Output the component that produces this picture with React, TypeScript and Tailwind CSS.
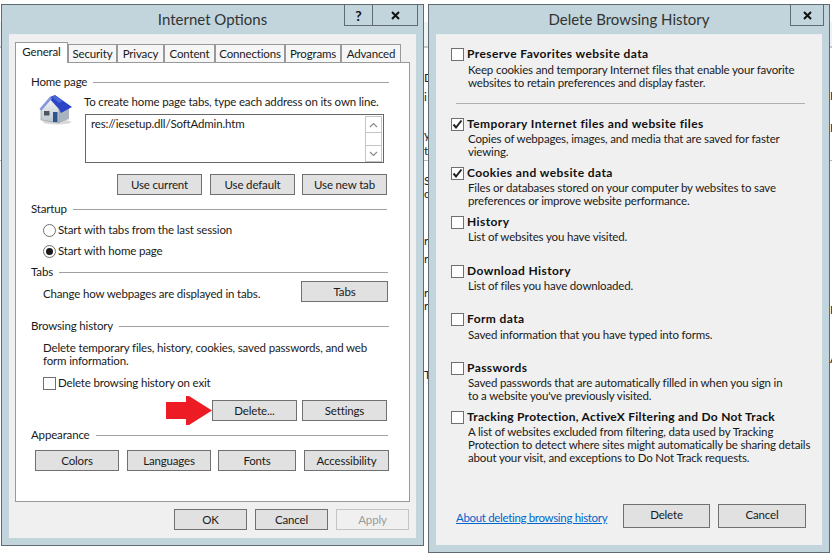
const font = "font-['Lato','Liberation_Sans',sans-serif]"

const tabs = [
  { label: "Security", w: "w-[49px]" },
  { label: "Privacy", w: "w-[47px]" },
  { label: "Content", w: "w-[51px]" },
  { label: "Connections", w: "w-[70px]" },
  { label: "Programs", w: "w-[56px]" },
  { label: "Advanced", w: "w-[60px]" },
]

const history = [
  {
    title: "Temporary Internet files and website files",
    lines: ["Copies of webpages, images, and media that are saved for faster", "viewing."],
    checked: true,
    h: "h-[49px]",
  },
  {
    title: "Cookies and website data",
    lines: ["Files or databases stored on your computer by websites to save", "preferences or improve website performance."],
    checked: true,
    h: "h-[49px]",
  },
  { title: "History", lines: ["List of websites you have visited."], h: "h-[49px]" },
  { title: "Download History", lines: ["List of files you have downloaded."], h: "h-[48px]" },
  { title: "Form data", lines: ["Saved information that you have typed into forms."], h: "h-[49px]", desc: "mt-px" },
  {
    title: "Passwords",
    lines: ["Saved passwords that are automatically filled in when you sign in", "to a website you've previously visited."],
    h: "h-[49px]",
  },
  {
    title: "Tracking Protection, ActiveX Filtering and Do Not Track",
    lines: [
      "A list of websites excluded from filtering, data used by Tracking",
      "Protection to detect where sites might automatically be sharing details",
      "about your visit, and exceptions to Do Not Track requests.",
    ],
    h: "h-[55px]",
    tight: true,
  },
]

// bits of the page behind the dialogs, seen in the gaps
const behind = [
  { ch: "D", pos: "left-[424px] top-[72px]" },
  { ch: "i", pos: "left-[424px] top-[91px]" },
  { ch: "y", pos: "left-[424px] top-[129px]" },
  { ch: "t", pos: "left-[424px] top-[145px]" },
  { ch: "S", pos: "left-[424px] top-[175px]" },
  { ch: "c", pos: "left-[424px] top-[188px]" },
  { ch: "r", pos: "left-[424px] top-[235px]" },
  { ch: "r", pos: "left-[424px] top-[253px]" },
  { ch: "r", pos: "left-[424px] top-[287px]" },
  { ch: "r", pos: "left-[424px] top-[300px]" },
  { ch: "T", pos: "left-[424px] top-[369px]" },
  { ch: "H", pos: "left-[830px] top-[90px]" },
  { ch: "H", pos: "left-[830px] top-[122px]" },
  { ch: "I", pos: "left-[830px] top-[304px]" },
  { ch: "A", pos: "left-[830px] top-[353px]" },
]

function Btn({ children, className = "" }: { children: React.ReactNode; className?: string }) {
  return (
    <button className={`flex h-[21px] items-center justify-center border border-[#707070] bg-[#e1e1e1] text-[#1a1a1a] ${className}`}>
      {children}
    </button>
  )
}

function GroupHead({ label, right = "mr-0" }: { label: string; right?: string }) {
  return (
    <div className={`flex h-4 items-center gap-[6px] ${right}`}>
      <span className="whitespace-nowrap">{label}</span>
      <div className="h-px flex-1 bg-[#a0a0a0]" />
    </div>
  )
}

function Check({ checked = false }: { checked?: boolean }) {
  return (
    <span className="flex h-[13px] w-[13px] shrink-0 items-center justify-center border border-[#707070] bg-white">
      {checked && (
        <svg width="11" height="11" viewBox="0 0 11 11">
          <path d="M1.5 5.5 L4 8.5 L9.5 1.5" fill="none" stroke="#222" strokeWidth="2" />
        </svg>
      )}
    </span>
  )
}

function Radio({ checked = false }: { checked?: boolean }) {
  return (
    <span className="flex h-[13px] w-[13px] shrink-0 items-center justify-center rounded-full border border-[#707070] bg-white">
      {checked && <span className="h-[7px] w-[7px] rounded-full bg-[#1a1a1a]" />}
    </span>
  )
}

function CloseBtn({ className = "" }: { className?: string }) {
  return (
    <span className={`flex h-[22px] items-center justify-center border border-[#5f6b70] ${className}`}>
      <svg width="9" height="9" viewBox="0 0 9 9">
        <path d="M1 1 L8 8 M8 1 L1 8" stroke="#111" strokeWidth="2" fill="none" />
      </svg>
    </span>
  )
}

function HouseIcon() {
  return (
    <svg width="34" height="30" viewBox="0 0 34 30" className="shrink-0">
      <defs>
        <linearGradient id="front" x1="0" y1="0" x2="0" y2="1">
          <stop offset="0" stopColor="#f2f4f6" />
          <stop offset="1" stopColor="#bcc5cd" />
        </linearGradient>
      </defs>
      <ellipse cx="19" cy="27" rx="14" ry="2.5" fill="#d8d8d8" />
      <path d="M21 14 L31 11 L31 24 L21 28 Z" fill="#a9b4be" />
      <path d="M3 14 L12 4 L21 14 L21 28 L3 25 Z" fill="url(#front)" stroke="#8b96a0" strokeWidth="0.6" />
      <path d="M12 2 L17 0 L34 12 L23 18 L21 14 L12 4 Z" fill="#2a45c6" />
      <path d="M14 2 L17 0.5 L25 6 L21 8 Z" fill="#4c66dc" />
      <path d="M1.5 14 L12 1.5 L14 3.5 L3.5 15.5 Z" fill="#8496e0" />
      <rect x="15" y="17" width="4.5" height="10" fill="#2c5590" />
      <rect x="6" y="16" width="5.5" height="4.5" fill="#4a5561" />
    </svg>
  )
}

function RedArrow() {
  return (
    <svg width="46" height="30" viewBox="0 0 46 30" className="shrink-0">
      <path d="M0 6 H20 V0 H23 L46 14.5 L23 29 H20 V23 H0 Z" fill="#ed1c24" />
    </svg>
  )
}

function SpinBar() {
  return (
    <div className="mr-px flex h-[46px] w-[17px] flex-col border border-[#c4c4c4] bg-white">
      <div className="flex h-[16px] items-center justify-center border-b border-[#c4c4c4]">
        <svg width="9" height="6" viewBox="0 0 9 6">
          <path d="M1 5 L4.5 1.5 L8 5" fill="none" stroke="#8a8a8a" strokeWidth="1.2" />
        </svg>
      </div>
      <div className="flex-1" />
      <div className="flex h-[16px] items-center justify-center border-t border-[#c4c4c4]">
        <svg width="9" height="6" viewBox="0 0 9 6">
          <path d="M1 1 L4.5 4.5 L8 1" fill="none" stroke="#8a8a8a" strokeWidth="1.2" />
        </svg>
      </div>
    </div>
  )
}

function InternetOptions() {
  return (
    <div className="flex h-[542px] w-[423px] shrink-0 flex-col border border-[#5f6b70] bg-[#c2d5dc] px-[7px] pb-[7px]">
      <div className="relative flex h-[29px] shrink-0 items-center justify-center text-[15px] tracking-normal text-[#333]">
        Internet Options
        <div className="absolute right-[-2px] top-[-1px] flex">
          <span className="flex h-[22px] w-[29px] items-center justify-center border border-[#5f6b70] text-[14px] font-bold text-[#111]">?</span>
          <CloseBtn className="ml-[-1px] w-[46px]" />
        </div>
      </div>
      <div className="flex flex-1 flex-col border-t border-[#e8eef0] bg-[#f0f0f0] px-[6px] pt-[7px]">
        <div className="relative z-10 flex h-[20px] items-end">
          <div className="mb-[-1px] flex h-[21px] w-[53px] items-center justify-center border border-b-0 border-[#999] bg-white pb-[2px]">General</div>
          {tabs.map((t) => (
            <div key={t.label} className={`flex h-[18px] ${t.w} items-center justify-center border border-b-0 border-[#999] bg-[#f6f6f6]`}>
              {t.label}
            </div>
          ))}
        </div>
        <div className="flex h-[440px] w-[395px] flex-col border border-[#999] bg-white pl-[15px] pr-[20px] pt-[11px]">
          <GroupHead label="Home page" />
          <div className="mt-1 flex">
            <div className="ml-[7px] w-[46px] shrink-0 pt-px">
              <HouseIcon />
            </div>
            <div className="min-w-0 flex-1">
              <div className="h-4 whitespace-nowrap leading-4">To create home page tabs, type each address on its own line.</div>
              <div className="ml-px mr-[5px] mt-1 flex h-[49px] justify-between border border-[#666] pl-[5px] pt-px">
                <span className="h-4 leading-4">res://iesetup.dll/SoftAdmin.htm</span>
                <SpinBar />
              </div>
            </div>
          </div>
          <div className="mr-[2px] mt-[11px] flex justify-end gap-[7px]">
            <Btn className="mr-px w-[85px]">Use current</Btn>
            <Btn className="w-[85px]">Use default</Btn>
            <Btn className="w-[85px]">Use new tab</Btn>
          </div>

          <div className="mt-[6px]">
            <GroupHead label="Startup" right="mr-[2px]" />
          </div>
          <label className="ml-3 mt-[5px] flex h-4 items-center gap-[2px]">
            <Radio />
            Start with tabs from the last session
          </label>
          <label className="ml-3 mt-[5px] flex h-4 items-center gap-[2px]">
            <Radio checked />
            Start with home page
          </label>

          <div className="mt-[5px]">
            <GroupHead label="Tabs" right="mr-px" />
          </div>
          <div className="mr-px mt-px flex justify-between">
            <span className="ml-3 mt-[5px] h-4 leading-4">Change how webpages are displayed in tabs.</span>
            <Btn className="w-[87px]">Tabs</Btn>
          </div>

          <div className="mt-[16px]">
            <GroupHead label="Browsing history" />
          </div>
          <div className="ml-3 mt-[7px] leading-[13px]">
            <div className="whitespace-nowrap">Delete temporary files, history, cookies, saved passwords, and web</div>
            <div>form information.</div>
          </div>
          <label className="ml-3 mt-2 flex h-4 items-center gap-[2px]">
            <Check />
            Delete browsing history on exit
          </label>
          <div className="mr-[2px] mt-[9px] flex items-center justify-end gap-[5px]">
            <div className="my-[-5px] mr-[-5px]">
              <RedArrow />
            </div>
            <Btn className="w-[85px]">Delete...</Btn>
            <Btn className="w-[85px]">Settings</Btn>
          </div>

          <div className="mt-[6px]">
            <GroupHead label="Appearance" right="mr-px" />
          </div>
          <div className="ml-1 mt-[7px] flex">
            <Btn className="w-[84px]">Colors</Btn>
            <Btn className="ml-2 w-[84px]">Languages</Btn>
            <Btn className="ml-[7px] w-[78px]">Fonts</Btn>
            <Btn className="ml-2 w-[85px]">Accessibility</Btn>
          </div>
        </div>
        <div className="mr-px mt-[7px] flex justify-end gap-2">
          <Btn className="w-[73px]">OK</Btn>
          <Btn className="w-[73px]">Cancel</Btn>
          <button className="flex h-[21px] w-[73px] items-center justify-center border border-[#c4c4c4] bg-[#f0f0f0] text-[#9a9a9a]">Apply</button>
        </div>
      </div>
    </div>
  )
}

function HistoryItem({ title, lines, checked, h, desc = "", tight }: { title: string; lines: string[]; checked?: boolean; h: string; desc?: string; tight?: boolean }) {
  return (
    <div className={`${h} shrink-0`}>
      <label className={`flex h-4 items-center gap-[3px] text-[12px] font-bold text-[#111] ${tight ? "tracking-[0.25px]" : "tracking-[0.4px]"}`}>
        <Check checked={checked} />
        {title}
      </label>
      <div className={`ml-[17px] leading-[13px] ${desc}`}>
        {lines.map((l) => (
          <div key={l} className="whitespace-nowrap">{l}</div>
        ))}
      </div>
    </div>
  )
}

function DeleteHistory() {
  return (
    <div className="flex h-[549px] w-[402px] shrink-0 flex-col border border-[#5f6b70] bg-[#c2d5dc] px-[7px] pb-[7px]">
      <div className="relative flex h-[29px] shrink-0 items-center justify-center text-[15px] tracking-normal text-[#333]">
        Delete Browsing History
        <div className="absolute right-[-2px] top-[-1px]">
          <CloseBtn className="w-[34px]" />
        </div>
      </div>
      <div className="flex flex-1 flex-col border-t border-[#e8eef0] bg-[#f0f0f0] pb-[17px] pl-[15px] pt-[11px]">
        <HistoryItem
          title="Preserve Favorites website data"
          lines={["Keep cookies and temporary Internet files that enable your favorite", "websites to retain preferences and display faster."]}
          h="h-[49px]"
          desc="mt-px"
        />
        <div className="ml-[5px] mr-[17px] mt-[8px] h-px bg-[#b0b0b0]" />
        <div className="mt-[12px] flex flex-col">
          {history.map((item) => (
            <HistoryItem key={item.title} title={item.title} lines={item.lines} checked={item.checked} h={item.h} desc={item.desc} tight={item.tight} />
          ))}
        </div>
        <div className="ml-[5px] mr-[16px] mt-auto flex items-center">
          <a className="mt-[3px] whitespace-nowrap tracking-[-0.33px] text-[#0066cc] underline">About deleting browsing history</a>
          <Btn className="ml-auto !h-[24px] w-[87px] pb-[2px]">Delete</Btn>
          <Btn className="ml-2 !h-[24px] w-[88px] pb-[2px]">Cancel</Btn>
        </div>
      </div>
    </div>
  )
}

export default function App() {
  return (
    <div className={`relative h-[558px] w-[832px] overflow-hidden bg-white text-[11.5px] tracking-[-0.16px] text-[#1a1a1a] ${font}`}>
      {/* page showing through behind the dialogs */}
      <div className="absolute inset-x-0 top-[22px] h-[24px] bg-[#eef3f5]" />
      <div className="absolute inset-x-0 top-[46px] h-[2px] bg-[#c8c8c8]" />
      <div className="absolute inset-x-0 top-[160px] h-px bg-[#b8b8b8]" />
      {behind.map((b) => (
        <span key={b.pos} className={`absolute ${b.pos} text-[12px] leading-3 text-[#222]`}>{b.ch}</span>
      ))}
      <div className="relative flex items-start gap-[4px] pl-px pt-1">
        <InternetOptions />
        <DeleteHistory />
      </div>
    </div>
  )
}
